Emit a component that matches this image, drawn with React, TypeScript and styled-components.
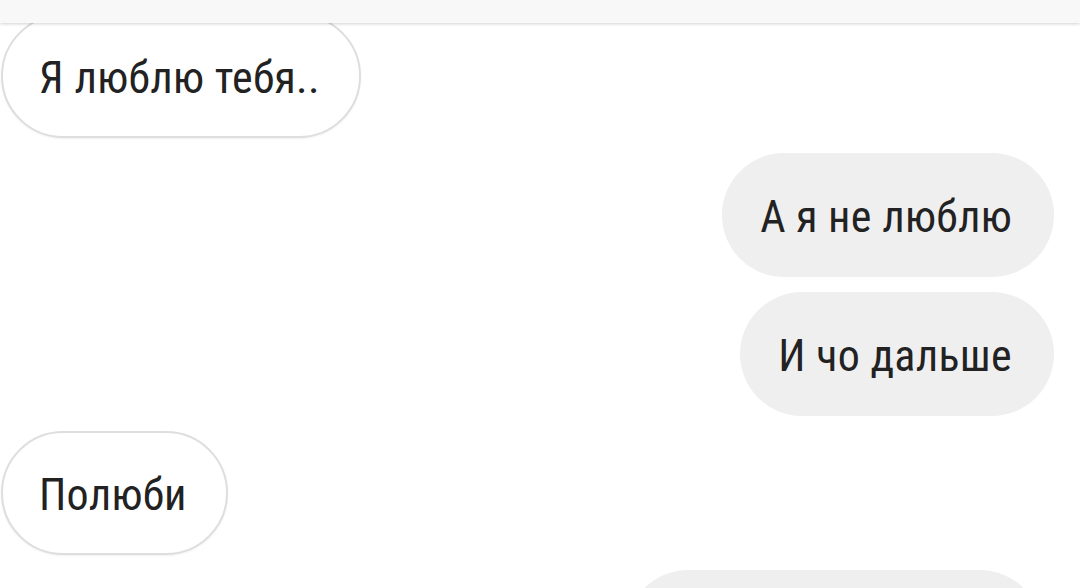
import styled, { createGlobalStyle } from "styled-components";

interface Message {
  id: number;
  text: string;
  mine: boolean;
}

const messages: Message[] = [
  { id: 1, text: "Я люблю тебя..", mine: false },
  { id: 2, text: "А я не люблю", mine: true },
  { id: 3, text: "И чо дальше", mine: true },
  { id: 4, text: "Полюби", mine: false },
  { id: 5, text: "", mine: true },
];

const App: React.FC = () => {
  return (
    <Screen>
      <GlobalStyle />
      <TopBar />
      <Thread>
        {messages.map((m) => (
          <Row key={m.id} $mine={m.mine}>
            <Bubble $mine={m.mine} $wide={!m.text}>
              {m.text}
            </Bubble>
          </Row>
        ))}
      </Thread>
    </Screen>
  );
};

export default App;

const GlobalStyle = createGlobalStyle`
  html, body {
    margin: 0;
    padding: 0;
    background: #fff;
    overflow: hidden;
  }
`;

const Screen = styled.div`
  position: relative;
  width: 1080px;
  height: 588px;
  overflow: hidden;
  background: #fff;
  font-family: Roboto, "Noto Sans", "Liberation Sans", sans-serif;
  font-stretch: 83%;
`;

const TopBar = styled.div`
  position: absolute;
  top: 0;
  left: 0;
  right: 0;
  height: 23px;
  background: #f8f8f8;
  box-shadow: 0 1px 3px rgba(0, 0, 0, 0.18);
  z-index: 2;
`;

const Thread = styled.div`
  display: flex;
  flex-direction: column;
  gap: 15px;
  padding: 14px 26px 0 1px;
`;

const Row = styled.div<{ $mine: boolean }>`
  display: flex;
  justify-content: ${(p) => (p.$mine ? "flex-end" : "flex-start")};
`;

const Bubble = styled.div<{ $mine: boolean; $wide: boolean }>`
  box-sizing: border-box;
  height: 124px;
  min-width: ${(p) => (p.$wide ? "416px" : "0")};
  margin-right: ${(p) => (p.$wide ? "12px" : "0")};
  display: flex;
  align-items: center;
  padding: ${(p) => (p.$mine ? "4px 42px 0 38px" : "4px 39px 0 36px")};
  border-radius: 62px;
  font-size: 44px;
  letter-spacing: 0.3px;
  color: #222;
  white-space: nowrap;
  background: ${(p) => (p.$mine ? "#efefef" : "#fff")};
  border: ${(p) => (p.$mine ? "none" : "2px solid #dedede")};
  box-shadow: ${(p) => (p.$mine ? "none" : "0 1px 2px rgba(0,0,0,0.06)")};
`;
